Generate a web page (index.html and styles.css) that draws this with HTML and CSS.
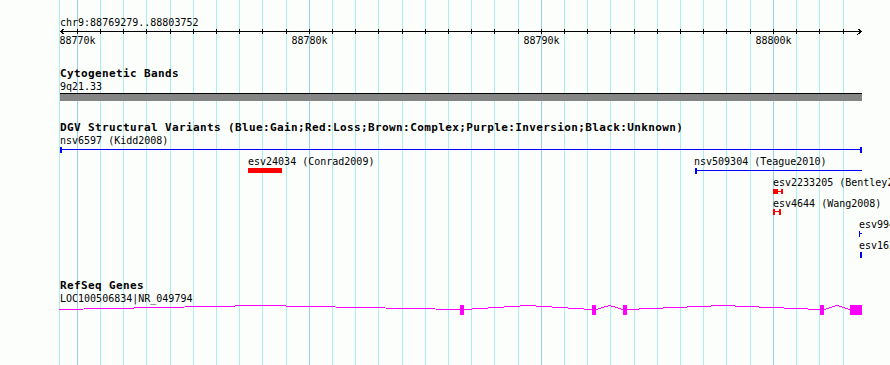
FILE: index.html
```html
<!DOCTYPE html>
<html lang="en">

<head>
    <meta charset="UTF-8" />
    <meta name="viewport" content="width=device-width, initial-scale=1.0" />
    <title>chr9:88769279..88803752</title>
    <link rel="stylesheet" href="styles.css">
</head>

<body>
    <div class="view">
        <!-- 1 kb grid, behind all tracks -->
        <svg class="grid" width="890" height="365" viewBox="0 0 890 365">
            <g class="minor">
                <line x1="59.5" y1="0" x2="59.5" y2="365" />
                <line x1="100.5" y1="0" x2="100.5" y2="365" />
                <line x1="123.5" y1="0" x2="123.5" y2="365" />
                <line x1="146.5" y1="0" x2="146.5" y2="365" />
                <line x1="170.5" y1="0" x2="170.5" y2="365" />
                <line x1="193.5" y1="0" x2="193.5" y2="365" />
                <line x1="216.5" y1="0" x2="216.5" y2="365" />
                <line x1="239.5" y1="0" x2="239.5" y2="365" />
                <line x1="262.5" y1="0" x2="262.5" y2="365" />
                <line x1="286.5" y1="0" x2="286.5" y2="365" />
                <line x1="332.5" y1="0" x2="332.5" y2="365" />
                <line x1="355.5" y1="0" x2="355.5" y2="365" />
                <line x1="378.5" y1="0" x2="378.5" y2="365" />
                <line x1="402.5" y1="0" x2="402.5" y2="365" />
                <line x1="425.5" y1="0" x2="425.5" y2="365" />
                <line x1="448.5" y1="0" x2="448.5" y2="365" />
                <line x1="471.5" y1="0" x2="471.5" y2="365" />
                <line x1="494.5" y1="0" x2="494.5" y2="365" />
                <line x1="518.5" y1="0" x2="518.5" y2="365" />
                <line x1="564.5" y1="0" x2="564.5" y2="365" />
                <line x1="587.5" y1="0" x2="587.5" y2="365" />
                <line x1="610.5" y1="0" x2="610.5" y2="365" />
                <line x1="634.5" y1="0" x2="634.5" y2="365" />
                <line x1="657.5" y1="0" x2="657.5" y2="365" />
                <line x1="680.5" y1="0" x2="680.5" y2="365" />
                <line x1="703.5" y1="0" x2="703.5" y2="365" />
                <line x1="726.5" y1="0" x2="726.5" y2="365" />
                <line x1="750.5" y1="0" x2="750.5" y2="365" />
                <line x1="796.5" y1="0" x2="796.5" y2="365" />
                <line x1="819.5" y1="0" x2="819.5" y2="365" />
                <line x1="843.5" y1="0" x2="843.5" y2="365" />
            </g>
            <g class="major">
                <line x1="77.5" y1="0" x2="77.5" y2="365" />
                <line x1="309.5" y1="0" x2="309.5" y2="365" />
                <line x1="541.5" y1="0" x2="541.5" y2="365" />
                <line x1="773.5" y1="0" x2="773.5" y2="365" />
            </g>
        </svg>

        <div class="tracks">
            <section class="ruler">
                <div class="locus">chr9:88769279..88803752</div>
                <svg class="scale" width="890" height="20" viewBox="0 29 890 20">
                    <line class="axis" x1="60" y1="31.5" x2="862" y2="31.5" />
                    <polyline class="axis" points="64.5,28.5 60.5,31.5 64.5,34.5" />
                    <polyline class="axis" points="857.5,28.5 861.5,31.5 857.5,34.5" />
                    <g class="ticks">
                        <line x1="77.5" y1="29" x2="77.5" y2="34" />
                        <line x1="100.5" y1="29" x2="100.5" y2="34" />
                        <line x1="123.5" y1="29" x2="123.5" y2="34" />
                        <line x1="146.5" y1="29" x2="146.5" y2="34" />
                        <line x1="170.5" y1="29" x2="170.5" y2="34" />
                        <line x1="193.5" y1="29" x2="193.5" y2="34" />
                        <line x1="216.5" y1="29" x2="216.5" y2="34" />
                        <line x1="239.5" y1="29" x2="239.5" y2="34" />
                        <line x1="262.5" y1="29" x2="262.5" y2="34" />
                        <line x1="286.5" y1="29" x2="286.5" y2="34" />
                        <line x1="309.5" y1="29" x2="309.5" y2="34" />
                        <line x1="332.5" y1="29" x2="332.5" y2="34" />
                        <line x1="355.5" y1="29" x2="355.5" y2="34" />
                        <line x1="378.5" y1="29" x2="378.5" y2="34" />
                        <line x1="402.5" y1="29" x2="402.5" y2="34" />
                        <line x1="425.5" y1="29" x2="425.5" y2="34" />
                        <line x1="448.5" y1="29" x2="448.5" y2="34" />
                        <line x1="471.5" y1="29" x2="471.5" y2="34" />
                        <line x1="494.5" y1="29" x2="494.5" y2="34" />
                        <line x1="518.5" y1="29" x2="518.5" y2="34" />
                        <line x1="541.5" y1="29" x2="541.5" y2="34" />
                        <line x1="564.5" y1="29" x2="564.5" y2="34" />
                        <line x1="587.5" y1="29" x2="587.5" y2="34" />
                        <line x1="610.5" y1="29" x2="610.5" y2="34" />
                        <line x1="634.5" y1="29" x2="634.5" y2="34" />
                        <line x1="657.5" y1="29" x2="657.5" y2="34" />
                        <line x1="680.5" y1="29" x2="680.5" y2="34" />
                        <line x1="703.5" y1="29" x2="703.5" y2="34" />
                        <line x1="726.5" y1="29" x2="726.5" y2="34" />
                        <line x1="750.5" y1="29" x2="750.5" y2="34" />
                        <line x1="773.5" y1="29" x2="773.5" y2="34" />
                        <line x1="796.5" y1="29" x2="796.5" y2="34" />
                        <line x1="819.5" y1="29" x2="819.5" y2="34" />
                        <line x1="843.5" y1="29" x2="843.5" y2="34" />
                    </g>
                    <text class="lbl" x="77.5" y="44" text-anchor="middle">88770k</text>
                    <text class="lbl" x="309.5" y="44" text-anchor="middle">88780k</text>
                    <text class="lbl" x="541.5" y="44" text-anchor="middle">88790k</text>
                    <text class="lbl" x="773.5" y="44" text-anchor="middle">88800k</text>
                </svg>
            </section>

            <section class="track cyto">
                <h2 class="track-title">Cytogenetic Bands</h2>
                <div class="feature-label">9q21.33</div>
                <svg class="band" width="890" height="9" viewBox="0 93 890 9">
                    <rect class="band-fill" x="60" y="93" width="802" height="8" />
                    <line class="band-edge" x1="60" y1="93.5" x2="862" y2="93.5" />
                </svg>
            </section>

            <section class="track dgv">
                <h2 class="track-title">DGV Structural Variants (Blue:Gain;Red:Loss;Brown:Complex;Purple:Inversion;Black:Unknown)</h2>
                <svg class="features" width="890" height="128" viewBox="0 134 890 128">
                    <text class="lbl" x="60" y="144">nsv6597 (Kidd2008)</text>
                    <g class="gain">
                        <rect x="60" y="149" width="802" height="1" />
                        <rect x="60" y="147" width="2" height="6" />
                        <rect x="860" y="147" width="2" height="6" />
                    </g>

                    <text class="lbl" x="248" y="165">esv24034 (Conrad2009)</text>
                    <rect class="loss" x="248" y="168" width="34" height="5" />

                    <text class="lbl" x="694" y="165">nsv509304 (Teague2010)</text>
                    <g class="gain">
                        <rect x="695" y="170" width="167" height="1" />
                        <rect x="695" y="168" width="2" height="6" />
                    </g>

                    <text class="lbl" x="773" y="186">esv2233205 (Bentley2008)</text>
                    <g class="loss">
                        <rect x="773" y="189" width="5" height="5" />
                        <rect x="778" y="191" width="3" height="1" />
                        <rect x="781" y="189" width="2" height="5" />
                    </g>

                    <text class="lbl" x="773" y="207">esv4644 (Wang2008)</text>
                    <g class="loss">
                        <rect x="773" y="209" width="2" height="6" />
                        <rect x="775" y="211" width="4" height="1" />
                        <rect x="779" y="209" width="2" height="6" />
                    </g>

                    <text class="lbl" x="859" y="228">esv994617</text>
                    <g class="gain">
                        <rect x="859" y="231" width="1" height="6" />
                        <rect x="860" y="233" width="2" height="1" />
                    </g>

                    <text class="lbl" x="859" y="249">esv16285</text>
                    <rect class="gain" x="860" y="252" width="2" height="6" />
                </svg>
            </section>

            <section class="track refseq">
                <h2 class="track-title">RefSeq Genes</h2>
                <svg class="features" width="890" height="73" viewBox="0 292 890 73">
                    <text class="lbl" x="60" y="302">LOC100506834|NR_049794</text>
                    <g class="intron">
                        <polyline points="59,309.5 260,305.5 460,309.5" />
                        <polyline points="464,309.5 528,305.5 592,309.5" />
                        <polyline points="596,309.5 609.5,305.5 623,309.5" />
                        <polyline points="627,309.5 723,305.5 820,309.5" />
                        <polyline points="824,309.5 837,305.5 850,309.5" />
                    </g>
                    <g class="exon">
                        <rect x="460" y="305" width="4" height="10" />
                        <rect x="592" y="305" width="4" height="10" />
                        <rect x="623" y="305" width="4" height="10" />
                        <rect x="820" y="305" width="4" height="10" />
                        <rect x="850" y="305" width="12" height="10" />
                    </g>
                </svg>
            </section>
        </div>
    </div>
</body>

</html>
```

FILE: styles.css
```css
* {
    box-sizing: border-box;
    margin: 0;
    padding: 0;
}

html,
body {
    overflow: hidden;
}

body {
    background: #fcfefc;
    color: #000;
    font-family: "DejaVu Sans Mono", "Liberation Mono", monospace;
}

.view {
    position: relative;
    width: 890px;
    height: 365px;
    overflow: hidden;
}

svg {
    display: block;
    overflow: hidden;
    shape-rendering: crispEdges;
}

/* grid */
.grid {
    position: absolute;
    inset: 0;
}

.grid line {
    stroke-width: 1;
}

.grid .minor line {
    stroke: #aaeeee;
}

.grid .major line {
    stroke: #99ccee;
}

.tracks {
    position: relative;
}

/* text */
.locus,
.feature-label {
    padding-left: 60px;
    font-size: 10px;
    line-height: 13px;
    white-space: nowrap;
}

.track-title {
    padding-left: 60px;
    font-size: 11px;
    line-height: 13px;
    font-weight: bold;
    letter-spacing: 0.38px;
    white-space: nowrap;
}

.lbl {
    font-family: "DejaVu Sans Mono", "Liberation Mono", monospace;
    font-size: 10px;
    fill: #000;
}

/* ruler */
.ruler {
    padding-top: 16px;
}

.axis,
.ticks line {
    stroke: #000;
    stroke-width: 1;
    fill: none;
}

/* tracks */
.cyto {
    margin-top: 18px;
}

.band-fill {
    fill: #858585;
}

.band-edge {
    stroke: #000;
    stroke-width: 1;
}

.dgv {
    margin-top: 19px;
}

.gain {
    fill: #0000ff;
}

.loss {
    fill: #ff0000;
}

.refseq {
    margin-top: 17px;
}

.intron polyline {
    fill: none;
    stroke: #ff00ff;
    stroke-width: 1;
}

.exon rect {
    fill: #ff00ff;
}
```
